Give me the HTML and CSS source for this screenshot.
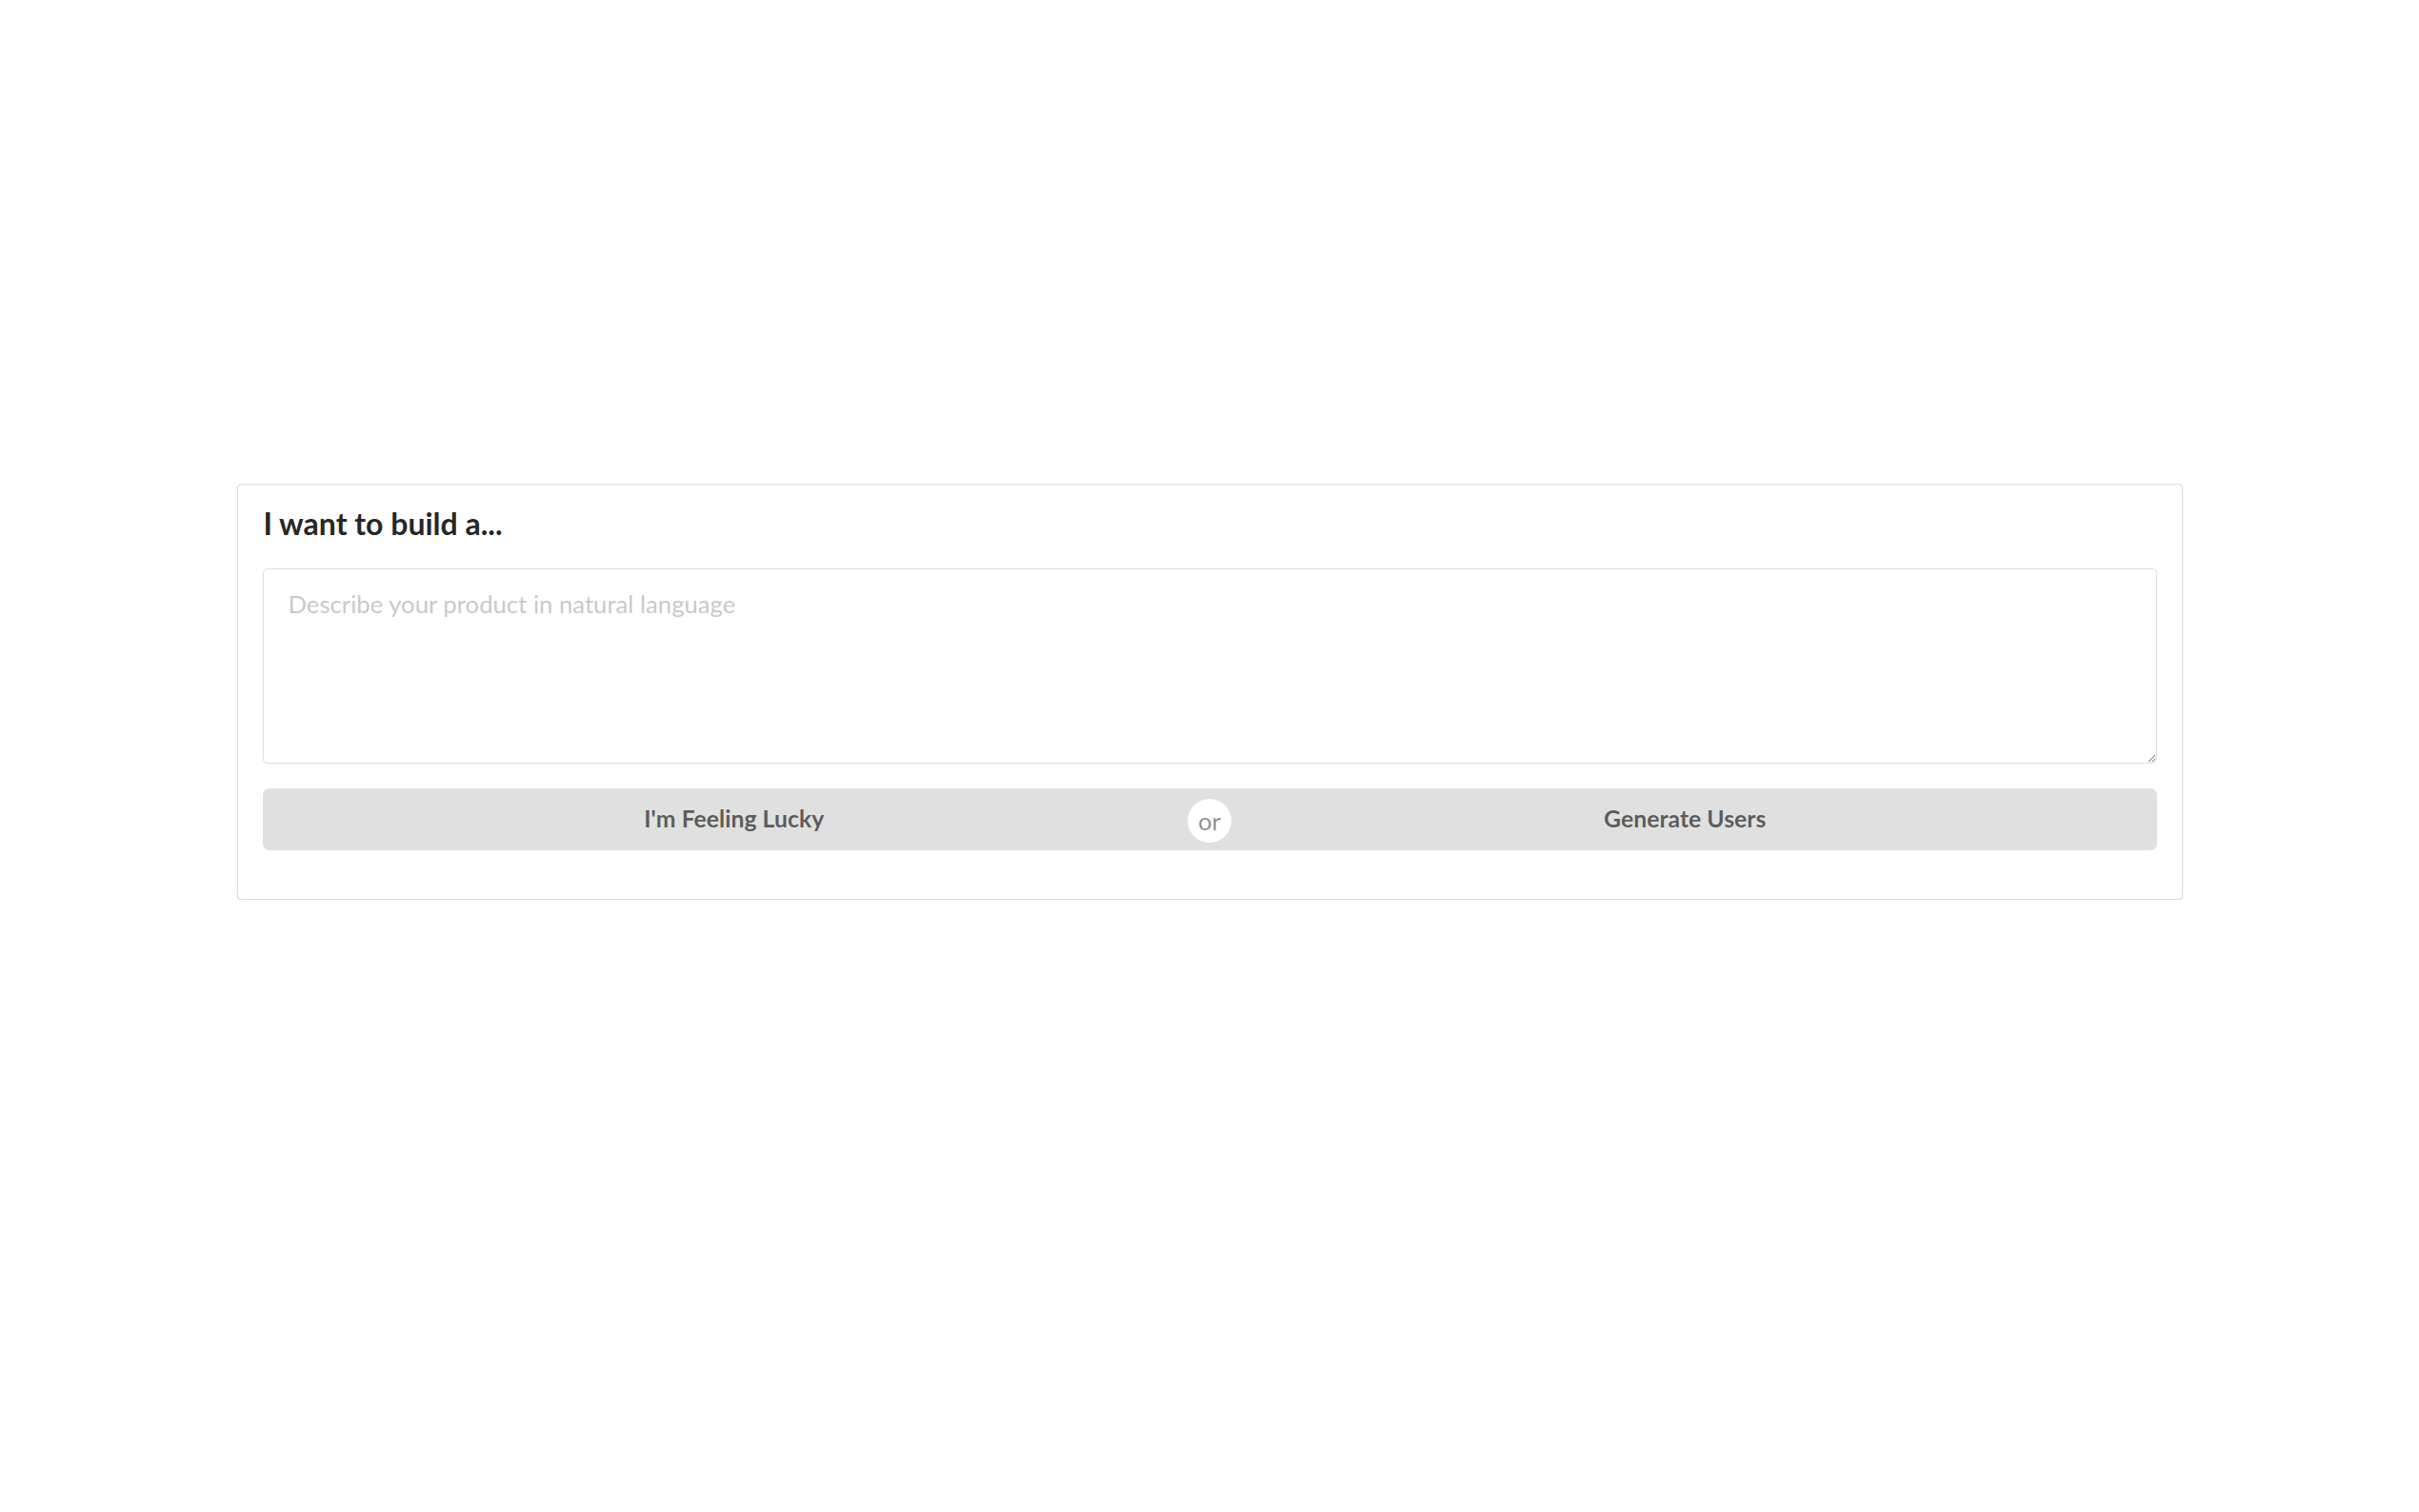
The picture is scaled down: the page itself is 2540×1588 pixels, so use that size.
FILE: index.html
```html
<!DOCTYPE html>
<html lang="en">
<head>
    <meta charset="UTF-8">
    <meta name="viewport" content="width=device-width, initial-scale=1.0">
    <title>Product Builder</title>
    <link rel="stylesheet" href="styles.css">
</head>
<body>
    <div class="page">
        <form class="builder-card" onsubmit="return false">
            <h3 class="builder-title">I want to build a...</h3>

            <textarea class="builder-input" placeholder="Describe your product in natural language"></textarea>

            <div class="builder-actions">
                <button type="button" class="action-button">I'm Feeling Lucky</button>
                <div class="or"></div>
                <button type="submit" class="action-button">Generate Users</button>
            </div>
        </form>
    </div>
</body>
</html>
```

FILE: styles.css
```css
body {
    margin: 0;
    padding: 0;
    font-family: Lato, "Open Sans", "Liberation Sans", sans-serif;
    font-size: 25.7px;
    color: rgba(0, 0, 0, 0.87);
    background: #ffffff;
}

.page {
    padding-top: 508px;
}

.builder-card {
    box-sizing: border-box;
    width: 2043px;
    margin: 0 auto;
    padding: 25px 26px 51px;
    background: #ffffff;
    border: 1px solid rgba(34, 36, 38, 0.15);
    border-radius: 5px;
    box-shadow: 0 1px 2px 0 rgba(34, 36, 38, 0.15);
}

.builder-title {
    margin: 0 0 32px;
    padding-left: 1px;
    font-size: 32px;
    line-height: 31px;
    font-weight: 700;
    color: rgba(0, 0, 0, 0.87);
}

.builder-input {
    display: block;
    box-sizing: border-box;
    width: 100%;
    height: 205px;
    margin: 0;
    padding: 20px 26px;
    font-family: inherit;
    font-size: 25.7px;
    line-height: 1.2857;
    color: rgba(0, 0, 0, 0.87);
    background: #ffffff;
    border: 1px solid rgba(34, 36, 38, 0.15);
    border-radius: 5px;
    outline: none;
    resize: vertical;
}

.builder-input::placeholder {
    color: rgba(191, 191, 191, 0.87);
}

.builder-actions {
    display: flex;
    margin-top: 26px;
}

.action-button {
    flex: 1;
    height: 65px;
    padding: 0 38px;
    font-family: inherit;
    font-size: 24.8px;
    font-weight: 700;
    line-height: 1;
    color: rgba(0, 0, 0, 0.6);
    background: #e0e0e0;
    border: none;
    cursor: pointer;
}

.action-button:first-child {
    border-radius: 7px 0 0 7px;
}

.action-button:last-child {
    border-radius: 0 7px 7px 0;
}

.action-button:hover {
    background: #cacbcd;
}

.or {
    position: relative;
    width: 8px;
    background: #e0e0e0;
    z-index: 3;
}

.or:before {
    content: "or";
    position: absolute;
    top: 50%;
    left: 50%;
    width: 46px;
    height: 46px;
    margin-top: -22px;
    margin-left: -23px;
    line-height: 46px;
    text-align: center;
    font-size: 25.7px;
    color: rgba(0, 0, 0, 0.45);
    background: #ffffff;
    border-radius: 50%;
}
```
